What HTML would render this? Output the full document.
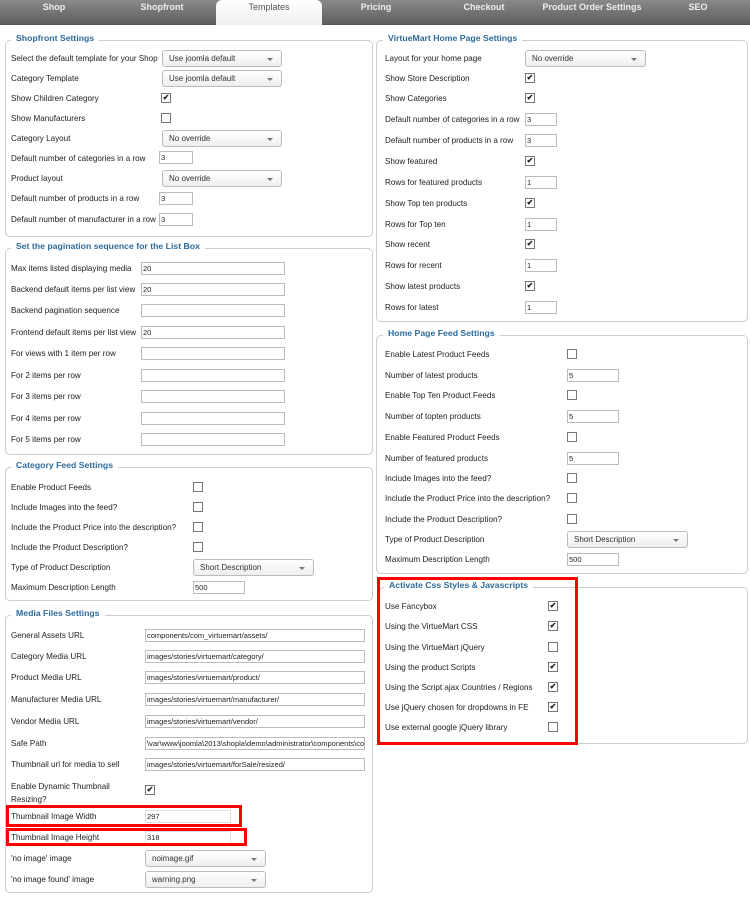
<!DOCTYPE html><html><head><meta charset="utf-8"><style>
body{margin:0;width:750px;height:904px;background:#fff;position:relative;font-family:"Liberation Sans",Arial,sans-serif;font-size:8.1px;color:#222;overflow:hidden}
div{position:absolute}
.tabs{left:0;top:0;width:750px;height:24px;background:linear-gradient(#8a8a8a,#5e5e5e);border-bottom:1px solid #555}
.t{top:2px;color:#eee;font-weight:bold;font-size:9px;text-align:center}
.act{left:216px;top:0;width:106px;height:25px;background:linear-gradient(#fff,#f0f0f0);border-radius:6px 6px 0 0}
.fs{border:1px solid #ccc;border-radius:5px}
.lg{color:#2d6b9c;font-weight:bold;font-size:8.7px;background:#fff;padding:0 5px}
.l{height:12px;line-height:12px;white-space:nowrap;margin-top:1px}
.cb{width:8px;height:8px;border:1px solid #777;background:#fff;font-size:8px;line-height:8px;text-align:center;font-weight:bold}
.in{height:11px;border:1px solid #bbb;background:#fff;font-size:7.5px;line-height:11px;padding-left:1px;white-space:nowrap;overflow:hidden}
.se{height:15px;border:1px solid #bbb;border-radius:3px;background:linear-gradient(#fff,#eee);font-size:8px;line-height:15px;padding-left:6px;color:#333}
.se:after{content:"";position:absolute;right:8px;top:7px;border:3px solid transparent;border-top:3px solid #777}
.red{border:3px solid #f00}
</style></head><body>
<div class="tabs"></div><div class="act"></div>
<div class="t" style="left:0;width:108px">Shop</div>
<div class="t" style="left:108px;width:108px">Shopfront</div>
<div class="t" style="left:216px;width:106px;color:#555;font-weight:normal">Templates</div>
<div class="t" style="left:322px;width:108px">Pricing</div>
<div class="t" style="left:430px;width:108px">Checkout</div>
<div class="t" style="left:538px;width:108px">Product Order Settings</div>
<div class="t" style="left:646px;width:104px">SEO</div>

<div class="fs" style="left:5px;top:40px;width:366px;height:195px"></div>
<div class="lg" style="left:11px;top:33px">Shopfront Settings</div>
<div class="l" style="left:11px;top:52px">Select the default template for your Shop</div><div class="se" style="left:162px;top:50px;width:112px">Use joomla default</div>
<div class="l" style="left:11px;top:72px">Category Template</div><div class="se" style="left:162px;top:70px;width:112px">Use joomla default</div>
<div class="l" style="left:11px;top:92px">Show Children Category</div><div class="cb" style="left:161px;top:93px">✔</div>
<div class="l" style="left:11px;top:112px">Show Manufacturers</div><div class="cb" style="left:161px;top:113px"></div>
<div class="l" style="left:11px;top:132px">Category Layout</div><div class="se" style="left:162px;top:130px;width:112px">No override</div>
<div class="l" style="left:11px;top:152px">Default number of categories in a row</div><div class="in" style="left:159px;top:151px;width:31px">3</div>
<div class="l" style="left:11px;top:172px">Product layout</div><div class="se" style="left:162px;top:170px;width:112px">No override</div>
<div class="l" style="left:11px;top:192px">Default number of products in a row</div><div class="in" style="left:159px;top:192px;width:31px">3</div>
<div class="l" style="left:11px;top:213px">Default number of manufacturer in a row</div><div class="in" style="left:159px;top:213px;width:31px">3</div>

<div class="fs" style="left:5px;top:248px;width:366px;height:205px"></div>
<div class="lg" style="left:11px;top:241px">Set the pagination sequence for the List Box</div>
<div class="l" style="left:11px;top:262px">Max items listed displaying media</div><div class="in" style="left:141px;top:262px;width:141px">20</div>
<div class="l" style="left:11px;top:283px">Backend default items per list view</div><div class="in" style="left:141px;top:283px;width:141px">20</div>
<div class="l" style="left:11px;top:304px">Backend pagination sequence</div><div class="in" style="left:141px;top:304px;width:141px"></div>
<div class="l" style="left:11px;top:326px">Frontend default items per list view</div><div class="in" style="left:141px;top:326px;width:141px">20</div>
<div class="l" style="left:11px;top:347px">For views with 1 item per row</div><div class="in" style="left:141px;top:347px;width:141px"></div>
<div class="l" style="left:11px;top:369px">For 2 items per row</div><div class="in" style="left:141px;top:369px;width:141px"></div>
<div class="l" style="left:11px;top:390px">For 3 items per row</div><div class="in" style="left:141px;top:390px;width:141px"></div>
<div class="l" style="left:11px;top:412px">For 4 items per row</div><div class="in" style="left:141px;top:412px;width:141px"></div>
<div class="l" style="left:11px;top:433px">For 5 items per row</div><div class="in" style="left:141px;top:433px;width:141px"></div>

<div class="fs" style="left:5px;top:467px;width:366px;height:132px"></div>
<div class="lg" style="left:11px;top:460px">Category Feed Settings</div>
<div class="l" style="left:11px;top:481px">Enable Product Feeds</div><div class="cb" style="left:193px;top:482px"></div>
<div class="l" style="left:11px;top:501px">Include Images into the feed?</div><div class="cb" style="left:193px;top:502px"></div>
<div class="l" style="left:11px;top:521px">Include the Product Price into the description?</div><div class="cb" style="left:193px;top:522px"></div>
<div class="l" style="left:11px;top:541px">Include the Product Description?</div><div class="cb" style="left:193px;top:542px"></div>
<div class="l" style="left:11px;top:561px">Type of Product Description</div><div class="se" style="left:193px;top:559px;width:113px">Short Description</div>
<div class="l" style="left:11px;top:581px">Maximum Description Length</div><div class="in" style="left:193px;top:581px;width:49px">500</div>

<div class="fs" style="left:5px;top:615px;width:366px;height:276px"></div>
<div class="lg" style="left:11px;top:608px">Media Files Settings</div>
<div class="l" style="left:11px;top:629px">General Assets URL</div><div class="in" style="left:145px;top:629px;width:217px">components/com_virtuemart/assets/</div>
<div class="l" style="left:11px;top:650px">Category Media URL</div><div class="in" style="left:145px;top:650px;width:217px">images/stories/virtuemart/category/</div>
<div class="l" style="left:11px;top:671px">Product Media URL</div><div class="in" style="left:145px;top:671px;width:217px">images/stories/virtuemart/product/</div>
<div class="l" style="left:11px;top:693px">Manufacturer Media URL</div><div class="in" style="left:145px;top:693px;width:217px">images/stories/virtuemart/manufacturer/</div>
<div class="l" style="left:11px;top:715px">Vendor Media URL</div><div class="in" style="left:145px;top:715px;width:217px">images/stories/virtuemart/vendor/</div>
<div class="l" style="left:11px;top:737px">Safe Path</div><div class="in" style="left:145px;top:737px;width:217px">\var\www\joomla\2013\shopla\demo\administrator\components\com</div>
<div class="l" style="left:11px;top:758px">Thumbnail url for media to sell</div><div class="in" style="left:145px;top:758px;width:217px">images/stories/virtuemart/forSale/resized/</div>
<div class="l" style="left:11px;top:779px;line-height:13px;white-space:normal;width:110px">Enable Dynamic Thumbnail Resizing?</div><div class="cb" style="left:145px;top:785px">✔</div>
<div class="l" style="left:11px;top:810px">Thumbnail Image Width</div><div class="in" style="left:145px;top:810px;width:83px;border-color:#ddd">297</div>
<div class="red" style="left:6px;top:805px;width:230px;height:16px"></div>
<div class="l" style="left:11px;top:831px">Thumbnail Image Height</div><div class="in" style="left:145px;top:831px;width:83px;border-color:#ddd">318</div>
<div class="red" style="left:6px;top:828px;width:235px;height:12px"></div>
<div class="l" style="left:11px;top:852px">'no image' image</div><div class="se" style="left:145px;top:850px;width:113px">noimage.gif</div>
<div class="l" style="left:11px;top:873px">'no image found' image</div><div class="se" style="left:145px;top:871px;width:113px">warning.png</div>

<div class="fs" style="left:376px;top:40px;width:370px;height:280px"></div>
<div class="lg" style="left:383px;top:33px">VirtueMart Home Page Settings</div>
<div class="l" style="left:385px;top:52px">Layout for your home page</div><div class="se" style="left:525px;top:50px;width:113px">No override</div>
<div class="l" style="left:385px;top:72px">Show Store Description</div><div class="cb" style="left:525px;top:73px">✔</div>
<div class="l" style="left:385px;top:92px">Show Categories</div><div class="cb" style="left:525px;top:93px">✔</div>
<div class="l" style="left:385px;top:113px">Default number of categories in a row</div><div class="in" style="left:525px;top:113px;width:29px">3</div>
<div class="l" style="left:385px;top:134px">Default number of products in a row</div><div class="in" style="left:525px;top:134px;width:29px">3</div>
<div class="l" style="left:385px;top:155px">Show featured</div><div class="cb" style="left:525px;top:156px">✔</div>
<div class="l" style="left:385px;top:176px">Rows for featured products</div><div class="in" style="left:525px;top:176px;width:29px">1</div>
<div class="l" style="left:385px;top:197px">Show Top ten products</div><div class="cb" style="left:525px;top:198px">✔</div>
<div class="l" style="left:385px;top:218px">Rows for Top ten</div><div class="in" style="left:525px;top:218px;width:29px">1</div>
<div class="l" style="left:385px;top:238px">Show recent</div><div class="cb" style="left:525px;top:239px">✔</div>
<div class="l" style="left:385px;top:259px">Rows for recent</div><div class="in" style="left:525px;top:259px;width:29px">1</div>
<div class="l" style="left:385px;top:280px">Show latest products</div><div class="cb" style="left:525px;top:281px">✔</div>
<div class="l" style="left:385px;top:301px">Rows for latest</div><div class="in" style="left:525px;top:301px;width:29px">1</div>

<div class="fs" style="left:376px;top:335px;width:370px;height:237px"></div>
<div class="lg" style="left:383px;top:328px">Home Page Feed Settings</div>
<div class="l" style="left:385px;top:348px">Enable Latest Product Feeds</div><div class="cb" style="left:567px;top:349px"></div>
<div class="l" style="left:385px;top:369px">Number of latest products</div><div class="in" style="left:567px;top:369px;width:49px">5</div>
<div class="l" style="left:385px;top:389px">Enable Top Ten Product Feeds</div><div class="cb" style="left:567px;top:390px"></div>
<div class="l" style="left:385px;top:410px">Number of topten products</div><div class="in" style="left:567px;top:410px;width:49px">5</div>
<div class="l" style="left:385px;top:431px">Enable Featured Product Feeds</div><div class="cb" style="left:567px;top:432px"></div>
<div class="l" style="left:385px;top:452px">Number of featured products</div><div class="in" style="left:567px;top:452px;width:49px">5</div>
<div class="l" style="left:385px;top:472px">Include Images into the feed?</div><div class="cb" style="left:567px;top:473px"></div>
<div class="l" style="left:385px;top:492px">Include the Product Price into the description?</div><div class="cb" style="left:567px;top:493px"></div>
<div class="l" style="left:385px;top:513px">Include the Product Description?</div><div class="cb" style="left:567px;top:514px"></div>
<div class="l" style="left:385px;top:533px">Type of Product Description</div><div class="se" style="left:567px;top:531px;width:113px">Short Description</div>
<div class="l" style="left:385px;top:553px">Maximum Description Length</div><div class="in" style="left:567px;top:553px;width:49px">500</div>

<div class="fs" style="left:379px;top:587px;width:367px;height:155px"></div>
<div class="lg" style="left:384px;top:580px">Activate Css Styles &amp; Javascripts</div>
<div class="l" style="left:385px;top:600px">Use Fancybox</div><div class="cb" style="left:548px;top:601px">✔</div>
<div class="l" style="left:385px;top:620px">Using the VirtueMart CSS</div><div class="cb" style="left:548px;top:621px">✔</div>
<div class="l" style="left:385px;top:641px">Using the VirtueMart jQuery</div><div class="cb" style="left:548px;top:642px"></div>
<div class="l" style="left:385px;top:661px">Using the product Scripts</div><div class="cb" style="left:548px;top:662px">✔</div>
<div class="l" style="left:385px;top:681px">Using the Script ajax Countries / Regions</div><div class="cb" style="left:548px;top:682px">✔</div>
<div class="l" style="left:385px;top:701px">Use jQuery chosen for dropdowns in FE</div><div class="cb" style="left:548px;top:702px">✔</div>
<div class="l" style="left:385px;top:721px">Use external google jQuery library</div><div class="cb" style="left:548px;top:722px"></div>
<div class="red" style="left:377px;top:577px;width:195px;height:162px"></div>
</body></html>
